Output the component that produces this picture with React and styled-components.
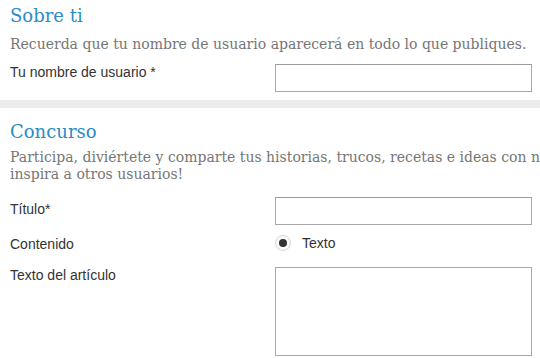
import React from 'react';
import styled, { createGlobalStyle } from 'styled-components';

const GlobalStyle = createGlobalStyle`
  html, body {
    margin: 0;
    padding: 0;
    background: #fff;
    overflow: hidden;
  }
  body {
    font-family: "Liberation Sans", Arial, sans-serif;
  }
`;

const Page = styled.div`
  width: 540px;
  height: 358px;
  overflow: hidden;
  background: #fff;
`;

const Section = styled.section`
  padding: ${p => p.$pad || '4px 8px 8px 10px'};
`;

const Divider = styled.div`
  height: 8px;
  background: #ebebeb;
`;

const Heading = styled.h2`
  margin: 0;
  font-family: "DejaVu Serif", "Liberation Serif", serif;
  font-weight: normal;
  font-size: 18px;
  line-height: 24px;
  color: #2b8bc6;
`;

const Desc = styled.p`
  margin: ${p => p.$top || 8}px 0 0;
  font-family: "DejaVu Serif", "Liberation Serif", serif;
  font-size: 14px;
  line-height: 17px;
  color: #767676;
  white-space: nowrap;
`;

const Row = styled.div`
  display: grid;
  grid-template-columns: 265px 257px;
  align-items: ${p => p.$align || 'start'};
  margin-top: ${p => p.$gap || 8}px;
`;

const Label = styled.label`
  font-size: 14px;
  color: #333;
  line-height: 16px;
  padding-top: ${p => p.$top || 0}px;
`;

const TextInput = styled.input`
  box-sizing: border-box;
  width: 257px;
  height: 28px;
  margin: 0;
  border: 1px solid #a9a9a9;
  border-top-color: #9c9c9c;
  background: #fff;
`;

const TextArea = styled.textarea`
  box-sizing: border-box;
  width: 257px;
  height: 89px;
  margin: 0;
  border: 1px solid #a9a9a9;
  resize: none;
  background: #fff;
`;

const RadioWrap = styled.div`
  display: flex;
  align-items: center;
  gap: 11px;
  font-size: 14px;
  color: #333;
`;

const RadioDot = styled.span`
  box-sizing: border-box;
  width: 16px;
  height: 16px;
  border-radius: 50%;
  border: 1px solid #d6d6d6;
  background: #fafafa;
  display: flex;
  align-items: center;
  justify-content: center;
  &::after {
    content: '';
    width: 8px;
    height: 8px;
    border-radius: 50%;
    background: #333;
  }
`;

export default function App() {
  return (
    <Page>
      <GlobalStyle />
      <Section $pad="4px 8px 8px 10px">
        <Heading>Sobre ti</Heading>
        <Desc $top={8}>Recuerda que tu nombre de usuario aparecerá en todo lo que publiques.</Desc>
        <Row $gap={11}>
          <Label>Tu nombre de usuario *</Label>
          <TextInput type="text" />
        </Row>
      </Section>
      <Divider />
      <Section $pad="12px 8px 0 10px">
        <Heading>Concurso</Heading>
        <Desc $top={5}>
          Participa, diviértete y comparte tus historias, trucos, recetas e ideas con nosotros e
          <br />
          inspira a otros usuarios!
        </Desc>
        <Row $gap={14}>
          <Label $top={4}>Título*</Label>
          <TextInput type="text" />
        </Row>
        <Row $gap={9} $align="center">
          <Label $top={2}>Contenido</Label>
          <RadioWrap>
            <RadioDot />
            Texto
          </RadioWrap>
        </Row>
        <Row $gap={15}>
          <Label>Texto del artículo</Label>
          <TextArea />
        </Row>
      </Section>
    </Page>
  );
}
